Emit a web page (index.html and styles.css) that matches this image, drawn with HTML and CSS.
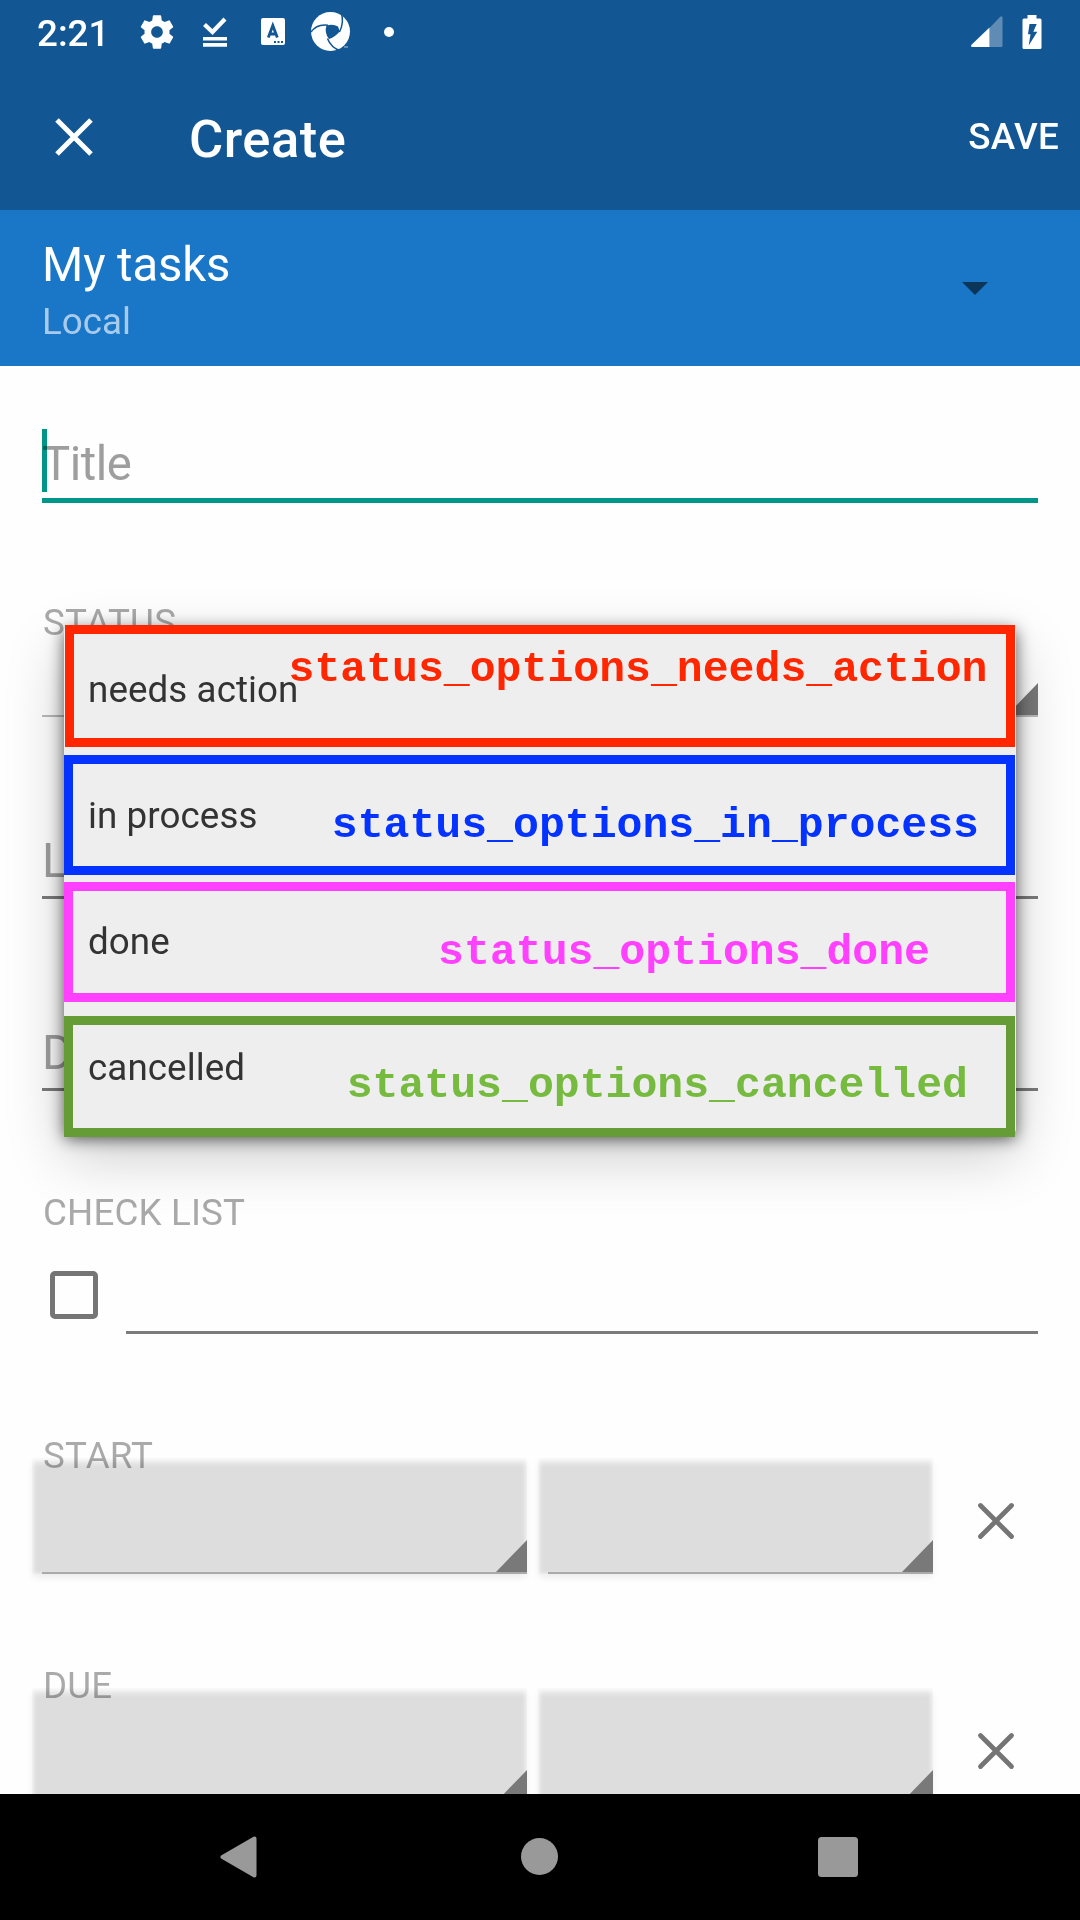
FILE: index.html
```html
<!DOCTYPE html>
<html lang="en">
<head>
<meta charset="utf-8">
<title>Create task</title>
<link rel="stylesheet" href="styles.css">
</head>
<body>
<div class="screen">
  <header class="top">
    <div class="statusbar">
      <span class="clock">2:21</span>
      <svg class="ic-gear" viewBox="0 0 24 24" fill="#fff"><path d="M19.43 12.98c.04-.32.07-.64.07-.98s-.03-.66-.07-.98l2.11-1.65c.19-.15.24-.42.12-.64l-2-3.46c-.12-.22-.39-.3-.61-.22l-2.49 1c-.52-.4-1.08-.73-1.69-.98l-.38-2.65C14.46 2.18 14.25 2 14 2h-4c-.25 0-.46.18-.49.42l-.38 2.65c-.61.25-1.17.59-1.69.98l-2.49-1c-.23-.09-.49 0-.61.22l-2 3.46c-.13.22-.07.49.12.64l2.11 1.65c-.04.32-.07.65-.07.98s.03.66.07.98l-2.11 1.65c-.19.15-.24.42-.12.64l2 3.46c.12.22.39.3.61.22l2.49-1c.52.4 1.08.73 1.69.98l.38 2.65c.03.24.24.42.49.42h4c.25 0 .46-.18.49-.42l.38-2.65c.61-.25 1.17-.59 1.69-.98l2.49 1c.23.09.49 0 .61-.22l2-3.46c.12-.22.07-.49-.12-.64l-2.11-1.65zM12 15.5c-1.93 0-3.500-1.57-3.500-3.500s1.570-3.500 3.500-3.500 3.500 1.570 3.500 3.500-1.570 3.500-3.500 3.500z"/></svg>
      <svg class="ic-check" viewBox="0 0 24 30"><path d="M1.500 7.500l8 7.500L22 2" fill="none" stroke="#fff" stroke-width="4.200"/><path d="M0 20h24v3.500H0zM0 26h24v3.700H0z" fill="#fff"/></svg>
      <svg class="ic-key" viewBox="0 0 24 27"><rect width="24" height="27" rx="2" fill="#fff"/><path d="M7.300 19.500L11.800 7.500L16.300 19.500M8.800 16h6" fill="none" stroke="#125793" stroke-width="2.800"/><path d="M13 23h2v2h-2zM16.500 23h2v2h-2zM20 23h2v2h-2z" fill="#125793"/></svg>
      <svg class="ic-swirl" viewBox="0 0 39 39"><circle cx="19.500" cy="19.500" r="19.500" fill="#fff"/><path d="M15.500 13.500Q22 11.500 27 14.500L28.800 19.500Q23.500 25.500 18 27Q13 20.500 15.500 13.500z" fill="#125793"/><path d="M17 13.200Q6 11.500 0 20M28.500 20Q33.500 10 30 0M16.500 26.500Q20 36 30 39" fill="none" stroke="#125793" stroke-width="1.500"/><path d="M33 35h4" stroke="#b5c9dc" stroke-width="1"/></svg>
      <svg class="ic-dot" viewBox="0 0 10 10"><circle cx="5" cy="5" r="5" fill="#fff"/></svg>
      <span class="spacer"></span>
      <svg class="ic-signal" viewBox="0 0 32 31"><path d="M18.500 12L29 1Q31.500-1 31.500 2V29.500Q31.500 31 30 31H18.500z" fill="#5f8bb4"/><path d="M18.500 11.500V31H1.500Q-.8 31 .5 28.800z" fill="#fff"/></svg>
      <svg class="ic-battery" viewBox="0 0 20 34"><path d="M5.500 0h9v3.500H18q1.500 0 1.500 1.500v27.500q0 1.500-1.500 1.500H2Q.5 34 .5 32.500V5q0-1.500 1.500-1.500h3.500z" fill="#fff"/><path d="M7.500 9h7.200L11.300 16.700h4L6.700 30.500 8.500 19.300H6z" fill="#125793"/></svg>
    </div>
    <div class="appbar">
      <svg class="ic-x" viewBox="0 0 38 38"><path d="M2 2l34 34M36 2L2 36" stroke="#fff" stroke-width="5" fill="none"/></svg>
      <h1 class="heading">Create</h1>
      <span class="save">SAVE</span>
    </div>
  </header>
  <div class="list-picker">
    <div>
      <div class="list-name">My tasks</div>
      <div class="list-kind">Local</div>
    </div>
    <svg class="ic-drop" viewBox="0 0 26 13"><path d="M0 0h26L13 13z" fill="#0c3659"/></svg>
  </div>
  <main class="form">
    <div class="field focused"><span class="caret"></span>Title</div>
    <div class="label label-status">STATUS</div>
    <div class="select"><i class="corner"></i></div>
    <div class="field location">Location</div>
    <div class="field description">Description</div>
    <div class="label">CHECK LIST</div>
    <div class="check-row"><span class="box"></span><span class="check-line"></span></div>
    <div class="label label-over">START</div>
    <div class="date-row">
      <div class="btn date"><i class="corner"></i></div>
      <div class="btn time"><i class="corner"></i></div>
      <svg class="ic-x clear" viewBox="0 0 38 38"><path d="M3.500 3.500l31 31M34.500 3.500l-31 31" stroke="#757575" stroke-width="4.800" stroke-linecap="round" fill="none"/></svg>
    </div>
    <div class="label label-over label-due">DUE</div>
    <div class="date-row">
      <div class="btn date"><i class="corner"></i></div>
      <div class="btn time"><i class="corner"></i></div>
      <svg class="ic-x clear" viewBox="0 0 38 38"><path d="M3.500 3.500l31 31M34.500 3.500l-31 31" stroke="#757575" stroke-width="4.800" stroke-linecap="round" fill="none"/></svg>
    </div>
  </main>
  <nav class="navbar">
    <svg viewBox="0 0 38 42"><path d="M34.500 2.500v37L2.500 21z" fill="#999" stroke="#999" stroke-width="4" stroke-linejoin="round"/></svg>
    <svg viewBox="0 0 38 42"><circle cx="20.500" cy="20.500" r="18.500" fill="#999"/></svg>
    <svg viewBox="0 0 40 42"><rect y="1" width="40" height="40" rx="3.500" fill="#999"/></svg>
  </nav>

  <div class="popup">
    <div class="option">needs action</div>
    <div class="option">in process</div>
    <div class="option">done</div>
    <div class="option">cancelled</div>
  </div>
  <div class="mark mark-red"><span>status_options_needs_action</span></div>
  <div class="mark mark-blue"><span>status_options_in_process</span></div>
  <div class="mark mark-pink"><span>status_options_done</span></div>
  <div class="mark mark-green"><span>status_options_cancelled</span></div>
</div>
</body>
</html>
```

FILE: styles.css
```css
* { box-sizing: border-box; }
body { margin: 0; font-family: Roboto, "Noto Sans", sans-serif; }
svg { display: block; flex: none; overflow: visible; }
.screen {
  position: relative;
  display: flex;
  flex-direction: column;
  width: 1080px;
  height: 1920px;
  overflow: hidden;
  background: #fefefe;
}

/* status bar and app bar */
.top { height: 210px; flex: none; background: #125793; color: #fff; font-weight: 500; }
.statusbar { display: flex; align-items: center; height: 63px; padding: 0 38px 0 37px; }
.clock { width: 100px; line-height: 42px; font-size: 36.75px; padding-top: 4px; }
.ic-gear { width: 40px; height: 40px; }
.ic-check { width: 24px; height: 30px; margin-left: 26px; }
.ic-key { width: 24px; height: 27px; margin-left: 34px; }
.ic-swirl { width: 39px; height: 39px; margin-left: 26px; }
.ic-dot { width: 10px; height: 10px; margin-left: 34px; }
.spacer { flex: 1; }
.ic-signal { width: 32px; height: 31px; margin-right: 19px; }
.ic-battery { width: 20px; height: 34px; }
.appbar { display: flex; align-items: center; height: 147px; padding: 0 21px 0 55px; }
.ic-x { width: 38px; height: 38px; }
.heading { flex: 1; margin: 5px 0 0 96px; font-size: 52.5px; font-weight: 500; line-height: 62px; letter-spacing: .5px; }
.save { font-size: 36.75px; line-height: 44px; padding-top: 1px; letter-spacing: .3px; }

/* list selector */
.list-picker {
  display: flex;
  justify-content: space-between;
  flex: none;
  height: 156px;
  padding: 27px 92px 0 42px;
  background: #1a76c7;
  color: #fff;
}
.list-name { font-size: 47.25px; line-height: 56px; letter-spacing: -.1px; }
.list-kind { font-size: 36.75px; line-height: 58px; color: #a9cbeb; }
.ic-drop { width: 26px; height: 13px; margin-top: 45px; }

/* form */
.form { flex: 1; min-height: 0; overflow: hidden; padding: 63px 42px 0; }
.field {
  height: 74px;
  border-bottom: 3px solid #7b7b7b;
  font-size: 47.25px;
  line-height: 73px;
  color: #9e9e9e;
}
.focused { position: relative; border-bottom: 5px solid #009688; line-height: 71px; letter-spacing: -.5px; }
.caret { position: absolute; left: 0; top: 0; width: 5px; height: 63px; background: #009688; mix-blend-mode: multiply; }
.label { margin-top: 100px; height: 42px; padding-left: 1px; font-size: 36.75px; line-height: 44px; color: #a9a9a9; letter-spacing: .15px; }
.label-status { margin-top: 98px; letter-spacing: .3px; }
.label-over { position: relative; z-index: 1; color: rgba(0, 0, 0, .33); }
.label-due { margin-top: 90px; }
.select { display: flex; justify-content: flex-end; align-items: flex-end; height: 74px; border-bottom: 2px solid #bababa; }
.corner { width: 31px; height: 32px; background: #797979; clip-path: polygon(100% 0, 100% 100%, 0 100%); }
.location { margin-top: 108px; }
.description { margin-top: 118px; }
.check-row { display: flex; justify-content: space-between; height: 101px; }
.box { width: 48px; height: 48px; margin: 38px 0 0 8px; border: 5.500px solid #757575; border-radius: 5px; }
.check-line { width: 912px; border-bottom: 3px solid #7b7b7b; }
.date-row { display: flex; align-items: center; height: 116px; margin: -18px 0 0 -10px; }
.btn {
  position: relative;
  display: flex;
  justify-content: flex-end;
  align-items: flex-end;
  height: 116px;
  padding-bottom: 2px;
  background: #ddd;
  box-shadow: inset 0 4px 6px rgba(255, 255, 255, .85), inset 0 0 4px rgba(255, 255, 255, .7), 0 4px 7px -1px rgba(0, 0, 0, .08);
}
.btn::after { content: ""; position: absolute; left: 10px; right: 0; bottom: 0; height: 2px; background: #aaa; }
.date { width: 495px; }
.time { width: 395px; margin-left: 11px; }
.clear { margin: 9px 0 0 44px; }

/* system navigation */
.navbar { display: flex; justify-content: space-between; align-items: center; flex: none; height: 126px; padding: 0 222px 0 220px; background: #000; }
.navbar svg { height: 42px; }

/* open dropdown */
.popup {
  position: absolute;
  left: 64px;
  top: 625px;
  width: 952px;
  height: 509px;
  padding-top: 2px;
  background: #eee;
  border-radius: 5px;
  box-shadow: 0 5px 16px rgba(0, 0, 0, .62), 0 22px 60px rgba(0, 0, 0, .2);
}
.option { height: 126px; padding-left: 24px; font-size: 36.75px; line-height: 126px; color: #333; letter-spacing: .08px; }

/* annotation frames over the options */
.mark {
  position: absolute;
  left: 64px;
  width: 951px;
  display: flex;
  justify-content: flex-end;
  align-items: flex-start;
  border: 9px solid;
  font: bold 43.15px/50px "Liberation Mono", monospace;
}
.mark-red { left: 65px; top: 624.5px; width: 949.5px; height: 122px; border-color: #ff2600; color: #ff2600; padding: 11px 18px 0 0; }
.mark-blue { top: 755px; height: 120px; border-color: #0433ff; color: #0433ff; padding: 37px 27px 0 0; }
.mark-pink { top: 882px; height: 120px; border-color: #ff40ff; color: #ff40ff; padding: 37px 76px 0 0; }
.mark-green { top: 1016px; height: 121px; border-color: #669c35; color: #76bb40; padding: 36px 38px 0 0; }
```
